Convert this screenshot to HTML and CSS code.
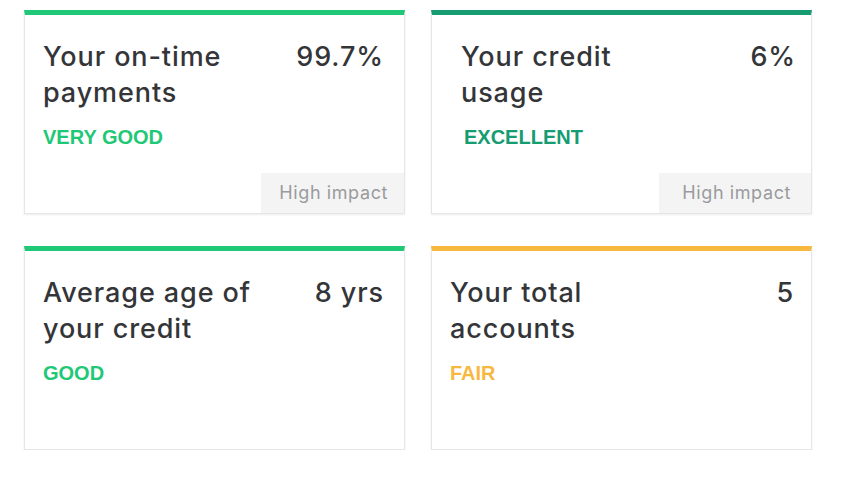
FILE: index.html
```html
<!DOCTYPE html>
<html>
<head>
<meta charset="utf-8">
<link rel="stylesheet" href="styles.css">
</head>
<body>
<div class="grid">
  <div class="card card--green">
    <div class="head">
      <div class="title">Your on-time payments</div>
      <div class="value">99.7%</div>
    </div>
    <div class="rating rating--green">VERY GOOD</div>
    <div class="impact">High impact</div>
  </div>
  <div class="card card--teal card--wide">
    <div class="head">
      <div class="title">Your credit usage</div>
      <div class="value">6%</div>
    </div>
    <div class="rating rating--teal">EXCELLENT</div>
    <div class="impact impact--wide">High impact</div>
  </div>
  <div class="card card--green">
    <div class="head">
      <div class="title">Average age of your credit</div>
      <div class="value">8 yrs</div>
    </div>
    <div class="rating rating--green">GOOD</div>
  </div>
  <div class="card card--amber card--tight">
    <div class="head">
      <div class="title">Your total accounts</div>
      <div class="value">5</div>
    </div>
    <div class="rating rating--amber">FAIR</div>
  </div>
</div>
</body>
</html>
```

FILE: styles.css
```css
html, body {
  margin: 0;
  padding: 0;
  background: #ffffff;
}

.grid {
  display: grid;
  grid-template-columns: 381px 381px;
  column-gap: 26px;
  row-gap: 32px;
  padding: 10px 0 0 24px;
}

.card {
  box-sizing: border-box;
  height: 204px;
  display: flex;
  flex-direction: column;
  background: #fff;
  border: 1px solid #e6e6e6;
  border-top: 5px solid #1fc876;
  box-shadow: 0 1px 2px rgba(0, 0, 0, 0.08);
  padding: 24px 0 0 18px;
}

.card--green { border-top-color: #1fc876; }
.card--teal { border-top-color: #159c71; }
.card--amber { border-top-color: #f7b840; }
.card--wide { padding-left: 29px; }

.head {
  display: flex;
  justify-content: space-between;
  align-items: flex-start;
  padding-right: 20px;
  font-family: "Inter", "Noto Sans", sans-serif;
  font-size: 27px;
  letter-spacing: 0.9px;
  line-height: 36px;
  color: #343538;
  font-weight: 500;
}

.card--wide .head { padding-right: 15px; }
.card--tight .head { padding-right: 17px; }

.title {
  width: 226px;
}

.value {
  text-align: right;
}

.rating {
  margin-top: 17px;
  font-family: "Liberation Sans", Arial, sans-serif;
  font-weight: bold;
  font-size: 20px;
  line-height: 19px;
}

.rating--green { color: #1fc876; }
.rating--teal { color: #159c71; margin-left: 3px; }
.rating--amber { color: #f7b840; }

.impact {
  margin-top: auto;
  align-self: flex-end;
  background: #f4f4f4;
  color: #9a9b9d;
  font-family: "Inter", "Noto Sans", sans-serif;
  font-size: 18px;
  letter-spacing: 0.6px;
  line-height: 40px;
  padding: 0 16px 0 18px;
}

.impact--wide {
  padding: 0 20px 0 23px;
}
```
